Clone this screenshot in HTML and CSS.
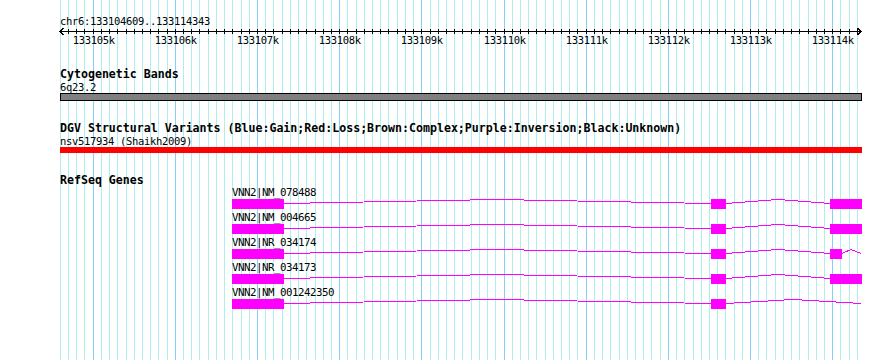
FILE: index.html
```html
<!DOCTYPE html>
<html>
<head>
    <title>chr6:133104609..133114343</title>
    <link rel="stylesheet" href="styles.css">
</head>
<body>
    <div class="browser">
        <svg id="grid" class="grid" width="890" height="360"></svg>

        <svg id="ruler" class="ruler" width="890" height="56">
            <text class="small" x="60" y="25">chr6:133104609..133114343</text>
            <line class="axis" x1="60" y1="31.5" x2="861" y2="31.5"/>
            <polyline class="axis" points="63.5,28 60,31.5 63.5,35"/>
            <polyline class="axis" points="857.5,28 861,31.5 857.5,35"/>
        </svg>

        <section class="track track-first">
            <div class="track-title">Cytogenetic Bands</div>
            <div class="feature-label">6q23.2</div>
            <svg class="lane" width="890" height="9">
                <rect class="band" x="60.5" y="0.5" width="801" height="7"/>
            </svg>
        </section>

        <section class="track">
            <div class="track-title">DGV Structural Variants (Blue:Gain;Red:Loss;Brown:Complex;Purple:Inversion;Black:Unknown)</div>
            <div class="feature-label">nsv517934 (Shaikh2009)</div>
            <svg class="lane" width="890" height="7">
                <rect class="loss" x="60" y="0" width="802" height="6"/>
            </svg>
        </section>

        <section class="track">
            <div class="track-title">RefSeq Genes</div>
            <svg class="lane" width="890" height="174">
                <g>
                    <polyline class="intron" points="284,17.5 497,13.5 711,17.5"/>
                    <polyline class="intron" points="726,17.5 778,13.5 830,17.5"/>
                    <rect class="exon" x="232" y="13" width="52" height="10"/>
                    <rect class="exon" x="711" y="13" width="15" height="10"/>
                    <rect class="exon" x="830" y="13" width="32" height="10"/>
                    <text class="small gene-label" x="232" y="10">VNN2|NM_078488</text>
                </g>
                <g transform="translate(0,25)">
                    <polyline class="intron" points="284,17.5 497,13.5 711,17.5"/>
                    <polyline class="intron" points="726,17.5 778,13.5 830,17.5"/>
                    <rect class="exon" x="232" y="13" width="52" height="10"/>
                    <rect class="exon" x="711" y="13" width="15" height="10"/>
                    <rect class="exon" x="830" y="13" width="32" height="10"/>
                    <text class="small gene-label" x="232" y="10">VNN2|NM_004665</text>
                </g>
                <g transform="translate(0,50)">
                    <polyline class="intron" points="284,17.5 497,13.5 711,17.5"/>
                    <polyline class="intron" points="726,17.5 778,13.5 830,17.5"/>
                    <polyline class="intron" points="842,17.5 851,13.5 861,17.5"/>
                    <rect class="exon" x="232" y="13" width="52" height="10"/>
                    <rect class="exon" x="711" y="13" width="15" height="10"/>
                    <rect class="exon" x="830" y="13" width="12" height="10"/>
                    <text class="small gene-label" x="232" y="10">VNN2|NR_034174</text>
                </g>
                <g transform="translate(0,75)">
                    <polyline class="intron" points="284,17.5 497,13.5 711,17.5"/>
                    <polyline class="intron" points="726,17.5 778,13.5 830,17.5"/>
                    <rect class="exon" x="232" y="13" width="52" height="10"/>
                    <rect class="exon" x="711" y="13" width="15" height="10"/>
                    <rect class="exon" x="830" y="13" width="32" height="10"/>
                    <text class="small gene-label" x="232" y="10">VNN2|NR_034173</text>
                </g>
                <g transform="translate(0,100)">
                    <polyline class="intron" points="284,17.5 497,13.5 711,17.5"/>
                    <polyline class="intron" points="726,17.5 793,13.5 861,17.5"/>
                    <rect class="exon" x="232" y="13" width="52" height="10"/>
                    <rect class="exon" x="711" y="13" width="15" height="10"/>
                    <text class="small gene-label" x="232" y="10">VNN2|NM_001242350</text>
                </g>
            </svg>
        </section>
    </div>

    <script>
        const SVG_NS = 'http://www.w3.org/2000/svg';
        const START = 133104609;
        const END = 133114343;
        const LEFT = 61;
        const WIDTH = 800;
        const scale = WIDTH / (END - START + 1);

        function xpos(bp) {
            return Math.floor(LEFT + (bp - START) * scale) + 0.5;
        }

        function make(tag, attrs) {
            const el = document.createElementNS(SVG_NS, tag);
            for (const key in attrs) el.setAttribute(key, attrs[key]);
            return el;
        }

        // grid lines every 100 bp, darker every 1 kb
        const grid = document.getElementById('grid');
        for (let bp = Math.floor(START / 100) * 100; bp <= END; bp += 100) {
            const x = xpos(bp);
            grid.appendChild(make('line', {
                x1: x, y1: 0, x2: x, y2: 360,
                class: bp % 1000 === 0 ? 'major' : 'minor'
            }));
        }

        // ruler ticks and labels
        const ruler = document.getElementById('ruler');
        for (let bp = Math.ceil(START / 100) * 100; bp <= END; bp += 100) {
            const x = xpos(bp);
            ruler.appendChild(make('line', { x1: x, y1: 29, x2: x, y2: 34, class: 'axis' }));
            if (bp % 1000 === 0) {
                const label = make('text', { x: x + 0.2, y: 44, class: 'small tick-label' });
                label.textContent = (bp / 1000) + 'k';
                ruler.appendChild(label);
            }
        }
    </script>
</body>
</html>
```

FILE: styles.css
```css
body {
    margin: 0;
    background-color: #fff;
}
.browser {
    position: relative;
    width: 890px;
    height: 360px;
    overflow: hidden;
    font-family: "DejaVu Sans Mono", "Liberation Mono", monospace;
    color: #000;
}
.grid {
    position: absolute;
    top: 0;
    left: 0;
}
.grid line {
    stroke-width: 1;
    shape-rendering: crispEdges;
}
.grid .minor {
    stroke: #afeeee;
}
.grid .major {
    stroke: #87cefa;
}
.ruler,
.lane {
    position: relative;
    display: block;
}
.track {
    position: relative;
    margin-top: 20px;
}
.track-first {
    margin-top: 12px;
}
.track-title {
    margin-left: 60px;
    font-size: 11.6px;
    font-weight: bold;
    line-height: 12px;
    white-space: nowrap;
}
.feature-label {
    margin: 1px 0 0 60px;
    font-size: 10.5px;
    letter-spacing: -0.32px;
    line-height: 12px;
    white-space: nowrap;
}
.small {
    font-family: "DejaVu Sans Mono", "Liberation Mono", monospace;
    font-size: 10.5px;
    letter-spacing: -0.32px;
    fill: #000;
}
.gene-label {
    font-size: 10.8px;
    letter-spacing: -0.5px;
}
.tick-label {
    text-anchor: middle;
}
.axis {
    fill: none;
    stroke: #000;
    stroke-width: 1;
    shape-rendering: crispEdges;
}
.band {
    fill: #808080;
    stroke: #000;
    stroke-width: 1;
    shape-rendering: crispEdges;
}
.loss {
    fill: #ff0000;
    shape-rendering: crispEdges;
}
.exon {
    fill: #ff00ff;
    shape-rendering: crispEdges;
}
.intron {
    fill: none;
    stroke: #ff00ff;
    stroke-width: 1;
    shape-rendering: crispEdges;
}
```
